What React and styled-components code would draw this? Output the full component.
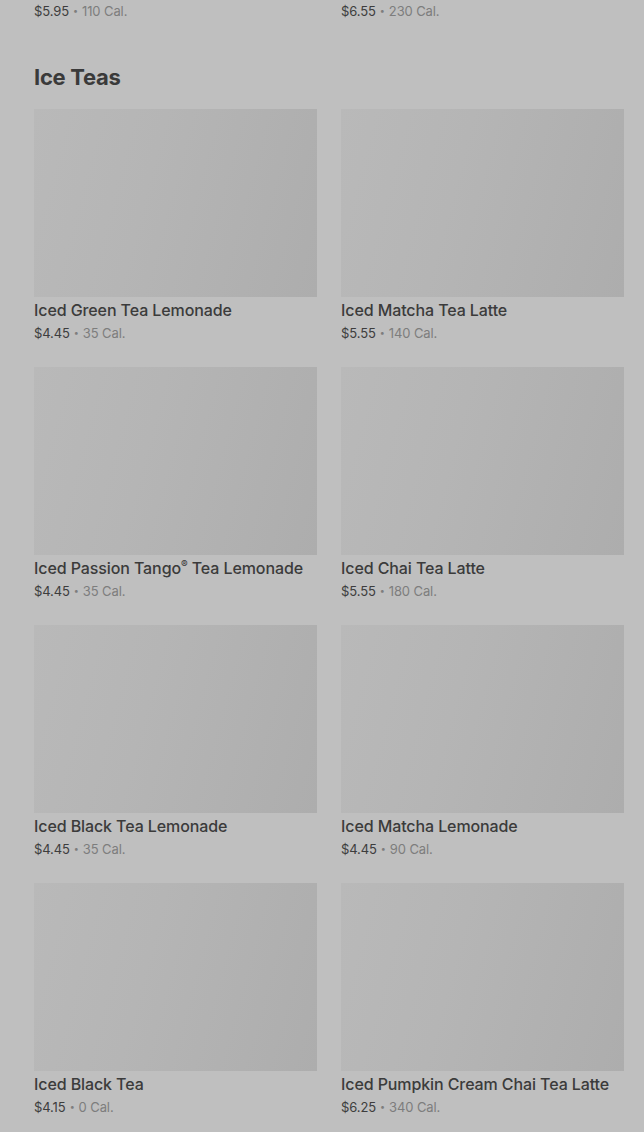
import styled, { createGlobalStyle } from 'styled-components'

const GlobalStyle = createGlobalStyle`
  html, body {
    margin: 0;
    padding: 0;
    background: #bfbfbf;
    overflow: hidden;
  }
  body {
    font-family: Inter, "Noto Sans", "Liberation Sans", sans-serif;
    color: #3b3b3b;
  }
`;

const previousRow = [
  { name: "Iced Caffè Mocha", price: "$5.95", cal: 110 },
  { name: "Iced Brown Sugar Oatmilk Shaken Espresso", price: "$6.55", cal: 230 },
];

const iceTeas = [
  { name: "Iced Green Tea Lemonade", price: "$4.45", cal: 35 },
  { name: "Iced Matcha Tea Latte", price: "$5.55", cal: 140 },
  { name: "Iced Passion Tango® Tea Lemonade", price: "$4.45", cal: 35 },
  { name: "Iced Chai Tea Latte", price: "$5.55", cal: 180 },
  { name: "Iced Black Tea Lemonade", price: "$4.45", cal: 35 },
  { name: "Iced Matcha Lemonade", price: "$4.45", cal: 90 },
  { name: "Iced Black Tea", price: "$4.15", cal: 0 },
  { name: "Iced Pumpkin Cream Chai Tea Latte", price: "$6.25", cal: 340 },
];

// the registered mark sits small and raised, like a sup
function renderName(name) {
  const parts = name.split("®");
  if (parts.length === 1) return name;
  return (
    <>
      {parts[0]}
      <Reg>®</Reg>
      {parts[1]}
    </>
  );
}

function ProductCard({ item }) {
  return (
    <Card>
      <Thumb />
      <Name>{renderName(item.name)}</Name>
      <Meta>
        <Price>{item.price}</Price>
        <Dot>•</Dot>
        <Cal>{item.cal} Cal.</Cal>
      </Meta>
    </Card>
  );
}

function App() {
  return (
    <>
      <GlobalStyle />
      <Menu>
        <Section>
          <Grid>
            {previousRow.map((item) => (
              <ProductCard key={item.name} item={item} />
            ))}
          </Grid>
        </Section>

        <Section $spaced>
          <Heading>Ice Teas</Heading>
          <Grid>
            {iceTeas.map((item) => (
              <ProductCard key={item.name} item={item} />
            ))}
          </Grid>
        </Section>
      </Menu>
    </>
  )
}

export default App

const Menu = styled.main`
  margin-top: -213px;
  padding: 0 20px 40px 34px;
  display: flex;
  flex-direction: column;
`;

const Section = styled.section`
  display: flex;
  flex-direction: column;
  margin-top: ${(p) => (p.$spaced ? "43px" : "0")};
`;

const Heading = styled.h2`
  margin: 0 0 18px;
  font-size: 22px;
  line-height: 28px;
  font-weight: 700;
  letter-spacing: -0.3px;
  color: #3a3a3a;
`;

const Grid = styled.div`
  display: grid;
  grid-template-columns: 1fr 1fr;
  column-gap: 24px;
  row-gap: 25px;
`;

const Card = styled.article`
  display: flex;
  flex-direction: column;
  min-width: 0;
`;

const Thumb = styled.div`
  height: 188px;
  background: linear-gradient(105deg, #b9b9b9 0%, #b5b5b5 40%, #adadad 100%);
`;

const Name = styled.h3`
  margin: 3px 0 0;
  font-size: 16px;
  line-height: 20px;
  font-weight: 500;
  letter-spacing: -0.1px;
  color: #3b3b3b;
  white-space: nowrap;
`;

const Reg = styled.span`
  font-size: 10px;
  line-height: 0;
  vertical-align: 6px;
`;

const Meta = styled.div`
  margin-top: 4px;
  display: flex;
  align-items: center;
  gap: 4px;
  font-size: 13px;
  line-height: 18px;
  letter-spacing: -0.1px;
`;

const Price = styled.span`
  color: #3d3d3d;
`;

const Dot = styled.span`
  color: #7d7d7d;
  font-size: 9px;
`;

const Cal = styled.span`
  color: #7d7d7d;
`;
